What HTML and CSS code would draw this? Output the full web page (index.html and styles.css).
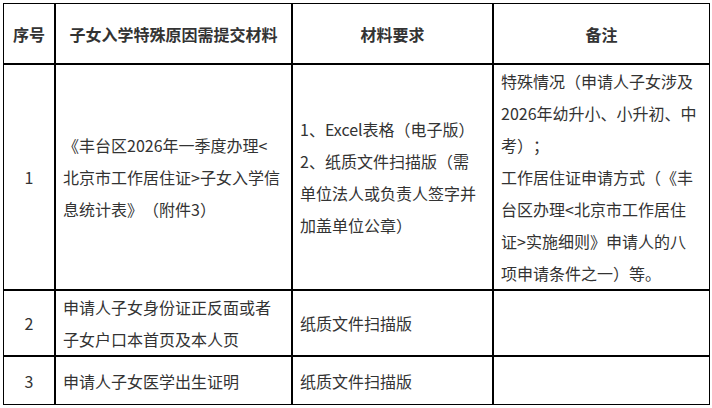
FILE: index.html
```html
<!DOCTYPE html>
<html lang="zh-CN">
<head>
<meta charset="utf-8">
<title>子女入学特殊原因需提交材料</title>
<link rel="stylesheet" href="styles.css">
</head>
<body>
<table class="grid">
  <thead>
    <tr class="row-head">
      <th class="c-no">序号</th>
      <th class="c-item">子女入学特殊原因需提交材料</th>
      <th class="c-req">材料要求</th>
      <th class="c-note">备注</th>
    </tr>
  </thead>
  <tbody>
    <tr class="row-1">
      <td class="num">1</td>
      <td>《丰台区2026年一季度办理&lt;<br>北京市工作居住证&gt;子女入学信<br>息统计表》（附件3）</td>
      <td><p>1、Excel表格（电子版）</p><p>2、纸质文件扫描版（需<br>单位法人或负责人签字并<br>加盖单位公章）</p></td>
      <td><p>特殊情况（申请人子女涉及<br>2026年幼升小、小升初、中<br>考）；</p><p>工作居住证申请方式（《丰<br>台区办理&lt;北京市工作居住<br>证&gt;实施细则》申请人的八<br>项申请条件之一）等。</p></td>
    </tr>
    <tr class="row-2">
      <td class="num">2</td>
      <td>申请人子女身份证正反面或者<br>子女户口本首页及本人页</td>
      <td>纸质文件扫描版</td>
      <td></td>
    </tr>
    <tr class="row-3">
      <td class="num">3</td>
      <td>申请人子女医学出生证明</td>
      <td>纸质文件扫描版</td>
      <td></td>
    </tr>
  </tbody>
</table>
</body>
</html>
```

FILE: styles.css
```css
html, body {
  margin: 0;
  padding: 0;
  background: #ffffff;
}

body {
  padding: 3px 0 0 3px;
  font-family: "Noto Sans CJK SC", "Microsoft YaHei", sans-serif;
  font-size: 16px;
  color: #333333;
  text-spacing-trim: space-all;
}

.grid {
  width: 707px;
  table-layout: fixed;
  border-collapse: separate;
  border-spacing: 0;
}

.grid th,
.grid td {
  box-sizing: border-box;
  border: 1px solid #000000;
  padding: 0 7px;
  line-height: 32px;
  vertical-align: middle;
  text-align: left;
}

.grid th {
  font-weight: bold;
  text-align: center;
}

.grid p {
  margin: 0;
}

.c-no { width: 52px; }
.c-item { width: 237px; }
.c-req { width: 201px; }
.c-note { width: 217px; }

.grid td.num {
  text-align: center;
}

.row-head > th { height: 61px; }
.row-1 > td { height: 226px; }
.row-2 > td { height: 66px; }
.row-3 > td { height: 49px; }
```
